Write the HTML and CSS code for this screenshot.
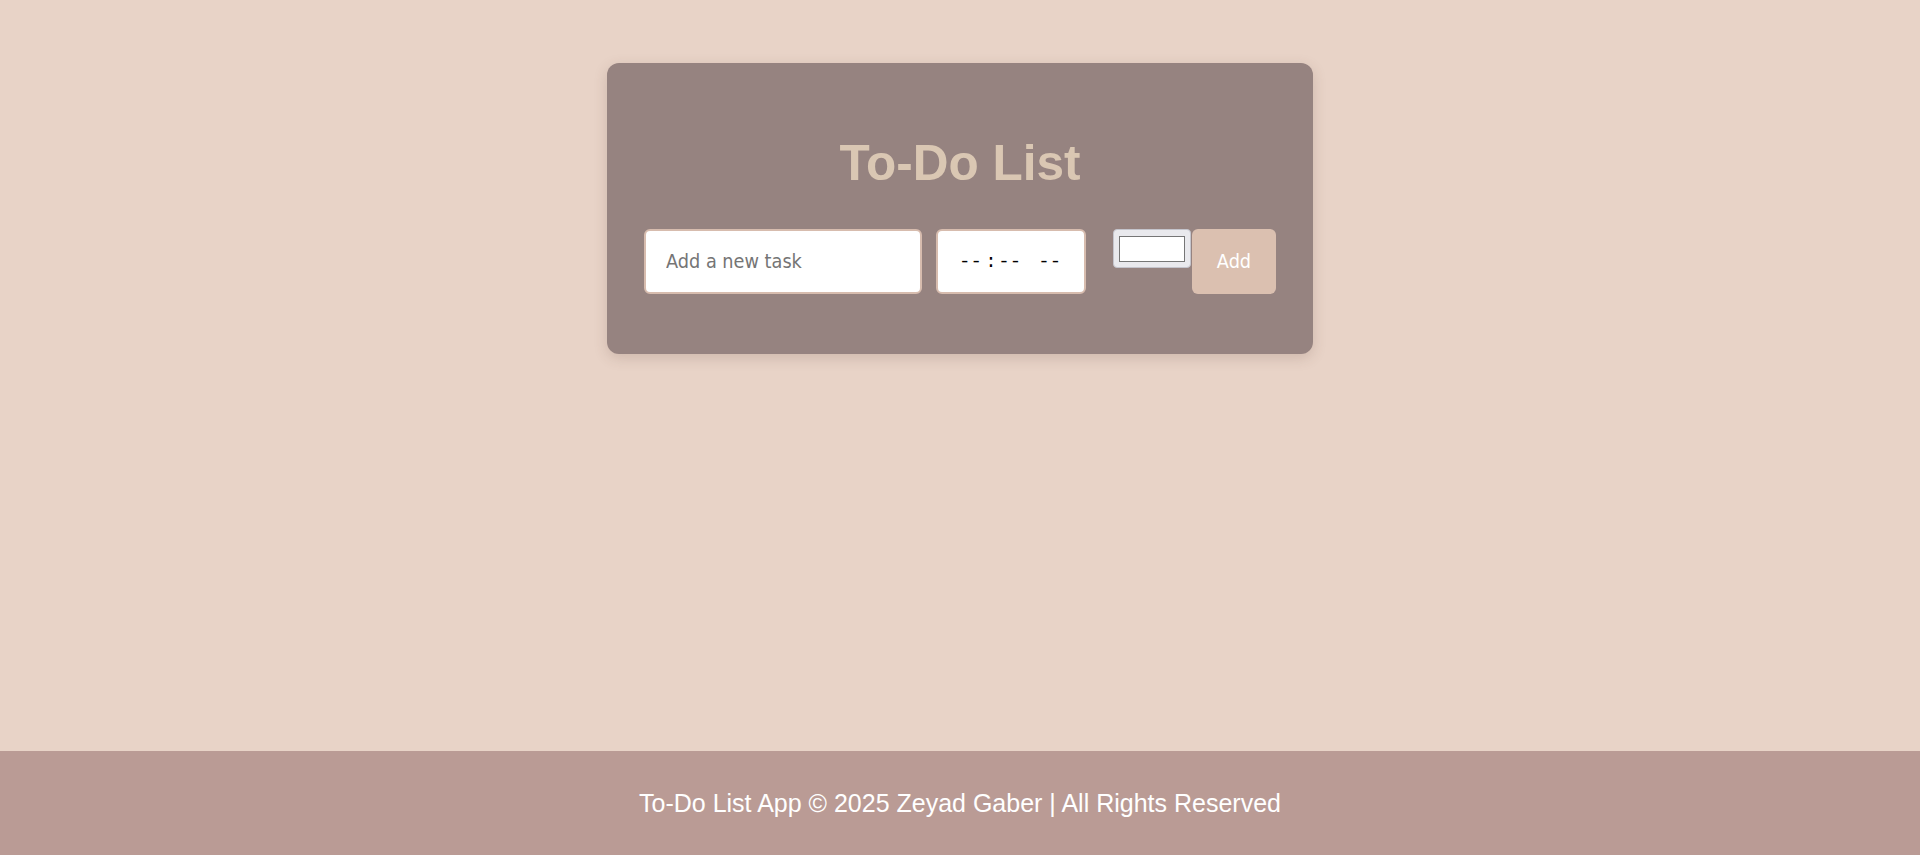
FILE: index.html
```html
<!DOCTYPE html>
<html lang="en">
<head>
<meta charset="UTF-8">
<title>To-Do List</title>
<link rel="stylesheet" href="styles.css">
</head>
<body>
<main class="page">
  <section class="card">
    <h1 class="title">To-Do List</h1>
    <form class="task-form">
      <input class="field task-input" type="text" placeholder="Add a new task">
      <input class="field time-input" type="time">
      <input class="color-input" type="color" value="#ffffff">
      <button class="add-btn" type="button">Add</button>
    </form>
  </section>
</main>
<footer class="footer">
  <p class="footer-text">To-Do List App © 2025 Zeyad Gaber | All Rights Reserved</p>
</footer>
</body>
</html>
```

FILE: styles.css
```css
html, body {
  margin: 0;
  padding: 0;
}

body {
  min-height: 100vh;
  display: flex;
  flex-direction: column;
  background: #e8d3c7;
  font-family: "Liberation Sans", Arial, sans-serif;
}

.page {
  flex: 1;
  display: flex;
  justify-content: center;
  align-items: flex-start;
  padding-top: 63px;
}

.card {
  width: 706px;
  box-sizing: border-box;
  padding: 36px 37px 60px;
  background: #968380;
  border-radius: 12px;
  box-shadow: 0 4px 14px rgba(90, 60, 50, 0.18);
}

.title {
  margin: 35px 0 38px;
  text-align: center;
  font-size: 49.5px;
  font-weight: bold;
  color: #dac7b3;
  line-height: normal;
}

.task-form {
  display: flex;
  align-items: flex-start;
  margin: 0;
}

.field {
  box-sizing: border-box;
  height: 65px;
  padding: 0 20px;
  border: 2px solid #d7bcae;
  border-radius: 6px;
  background: #fff;
  font-family: "DejaVu Sans Condensed", "DejaVu Sans", sans-serif;
  font-size: 19.7px;
  color: #000;
  outline: none;
}

.task-input {
  width: 278px;
  margin-right: 14px;
}

.task-input::placeholder {
  color: #757575;
}

.time-input {
  width: 150px;
  margin-right: 27px;
  font-family: "Liberation Mono", "DejaVu Sans Mono", monospace;
  font-size: 19px;
}

.time-input::-webkit-datetime-edit-text {
  padding: 0 0.6px 0 2.5px;
}

.time-input::-webkit-datetime-edit-ampm-field {
  margin-left: 6.4px;
}

.time-input::-webkit-calendar-picker-indicator {
  display: none;
}

.color-input {
  box-sizing: border-box;
  width: 78px;
  height: 39px;
  margin: 0 1px 0 0;
  padding: 0;
  border: 1px solid #c4c4cc;
  border-radius: 4px;
  background: #e9e9ed;
  cursor: pointer;
}

.color-input::-webkit-color-swatch-wrapper {
  padding: 6px 5px 5px 5px;
}

.color-input::-webkit-color-swatch {
  border: 1px solid #767676;
  border-radius: 0;
}

.add-btn {
  box-sizing: border-box;
  width: 84px;
  height: 65px;
  padding: 0;
  border: none;
  border-radius: 6px;
  background: #dbc0b0;
  color: #fff;
  font-family: "DejaVu Sans Condensed", "DejaVu Sans", sans-serif;
  font-size: 19.7px;
  cursor: pointer;
}

.footer {
  background: #ba9b95;
  padding: 38px 0;
  text-align: center;
}

.footer-text {
  margin: 0;
  color: #fff;
  font-size: 25px;
  line-height: 28px;
}
```
